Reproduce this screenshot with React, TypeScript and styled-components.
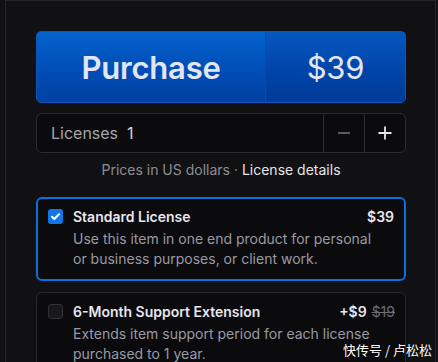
import React from "react";
import styled, { createGlobalStyle } from "styled-components";

const Global = createGlobalStyle`
  html, body { margin: 0; padding: 0; background: #111113; }
  body { font-family: Inter, "Noto Sans", sans-serif; -webkit-font-smoothing: antialiased; }
  * { box-sizing: border-box; }
`;

const Page = styled.div`
  width: 438px;
  height: 362px;
  overflow: hidden;
  position: relative;
  background: #111113;
  padding-left: 5px;
`;

const Panel = styled.div`
  width: 431px;
  height: 362px;
  border: 1px solid #252528;
  border-bottom: none;
  background: #111113;
  padding: 30px 29px 0 30px;
  display: flex;
  flex-direction: column;
  & > * { flex: none; }
`;

const BuyButton = styled.button`
  display: flex;
  width: 370px;
  height: 72px;
  padding: 0;
  border: 1px solid #0a55c0;
  border-radius: 5px;
  overflow: hidden;
  background: linear-gradient(180deg, #0462cc 0%, #004fb8 50%, #0040a2 100%);
  color: #e2e6f3;
  cursor: pointer;
  font-family: Inter, sans-serif;
`;

const BuyLabel = styled.span<{ $w: number; $weight: number; $shade?: boolean }>`
  width: ${(p) => p.$w}px;
  display: flex;
  align-items: center;
  justify-content: center;
  font-size: 31px;
  font-weight: ${(p) => p.$weight};
  letter-spacing: -0.2px;
  ${(p) =>
    p.$shade
      ? "border-left: 1px solid #0a4aa8; background: linear-gradient(180deg, #0458c0 0%, #0046aa 50%, #003a98 100%); flex: 1;"
      : ""}
`;

const QtyBox = styled.div`
  margin-top: 10px;
  height: 40px;
  display: flex;
  align-items: stretch;
  border: 1px solid #2c2c31;
  border-radius: 6px;
  background: #0b0b0e;
`;

const QtyLabel = styled.div`
  flex: 1;
  display: flex;
  align-items: center;
  padding-left: 14px;
  gap: 9px;
  font-size: 16px;
  color: #a4a4ad;
`;

const QtyValue = styled.span`
  color: #d6d6de;
`;

const QtyBtn = styled.div`
  width: 41px;
  border-left: 1px solid #2c2c31;
  display: flex;
  align-items: center;
  justify-content: center;
`;

const Note = styled.div`
  margin-top: 7px;
  text-align: center;
  font-size: 14px;
  line-height: 20px;
  color: #8d8d96;
`;

const NoteLink = styled.span`
  color: #e4e4ec;
`;

const Card = styled.div<{ $active?: boolean }>`
  margin-top: ${(p) => (p.$active ? "17px" : "11px")};
  border: ${(p) => (p.$active ? "2px solid #0a6fe0" : "1px solid #27272b")};
  border-radius: 6px;
  background: #0b0b0e;
  padding: ${(p) => (p.$active ? "8px 10px 10px 10px" : "9px 10px 10px 11px")};
  display: flex;
  gap: 10px;
`;

const Check = styled.div<{ $on?: boolean }>`
  width: 15px;
  height: 15px;
  margin-top: 2px;
  flex: none;
  border-radius: 3px;
  background: ${(p) => (p.$on ? "#1476e6" : "#19191d")};
  border: ${(p) => (p.$on ? "none" : "1px solid #303036")};
  display: flex;
  align-items: center;
  justify-content: center;
`;

const CardBody = styled.div`
  flex: 1;
  display: flex;
  flex-direction: column;
`;

const CardHead = styled.div`
  display: flex;
  justify-content: space-between;
  align-items: center;
  font-size: 14px;
  line-height: 20px;
  font-weight: 600;
  color: #e6e6ee;
`;

const Price = styled.span`
  display: flex;
  gap: 5px;
`;

const OldPrice = styled.span`
  color: #6c6c74;
  font-weight: 400;
  text-decoration: line-through;
`;

const Desc = styled.div`
  font-size: 14px;
  line-height: 20px;
  color: #9a9aa3;
  margin-top: 2px;
`;

const Watermark = styled.div`
  position: absolute;
  right: 6px;
  bottom: 3px;
  font-family: "Noto Sans CJK SC", sans-serif;
  font-size: 13px;
  color: #ffffff;
  text-shadow: 0 0 2px #000;
`;

export default function App() {
  return (
    <>
      <Global />
      <Page>
        <Panel>
          <BuyButton>
            <BuyLabel $w={228} $weight={600}>Purchase</BuyLabel>
            <BuyLabel $w={141} $weight={400} $shade>$39</BuyLabel>
          </BuyButton>
          <QtyBox>
            <QtyLabel>
              Licenses <QtyValue>1</QtyValue>
            </QtyLabel>
            <QtyBtn>
              <svg width="14" height="14" viewBox="0 0 14 14">
                <path d="M1 7h12" stroke="#6e6e76" strokeWidth="1.6" />
              </svg>
            </QtyBtn>
            <QtyBtn>
              <svg width="14" height="14" viewBox="0 0 14 14">
                <path d="M0.5 7h13M7 0.5v13" stroke="#e6e6ee" strokeWidth="1.8" />
              </svg>
            </QtyBtn>
          </QtyBox>
          <Note>
            Prices in US dollars · <NoteLink>License details</NoteLink>
          </Note>
          <Card $active>
            <Check $on>
              <svg width="11" height="11" viewBox="0 0 11 11">
                <path d="M2 5.8l2.3 2.2L9 3.2" fill="none" stroke="#fff" strokeWidth="2" strokeLinecap="round" strokeLinejoin="round" />
              </svg>
            </Check>
            <CardBody>
              <CardHead>
                <span>Standard License</span>
                <span>$39</span>
              </CardHead>
              <Desc>
                Use this item in one end product for personal
                <br />
                or business purposes, or client work.
              </Desc>
            </CardBody>
          </Card>
          <Card>
            <Check />
            <CardBody>
              <CardHead>
                <span>6-Month Support Extension</span>
                <Price>
                  <span>+$9</span>
                  <OldPrice>$19</OldPrice>
                </Price>
              </CardHead>
              <Desc>
                Extends item support period for each license
                <br />
                purchased to 1 year.
              </Desc>
            </CardBody>
          </Card>
        </Panel>
        <Watermark>快传号 / 卢松松</Watermark>
      </Page>
    </>
  );
}
